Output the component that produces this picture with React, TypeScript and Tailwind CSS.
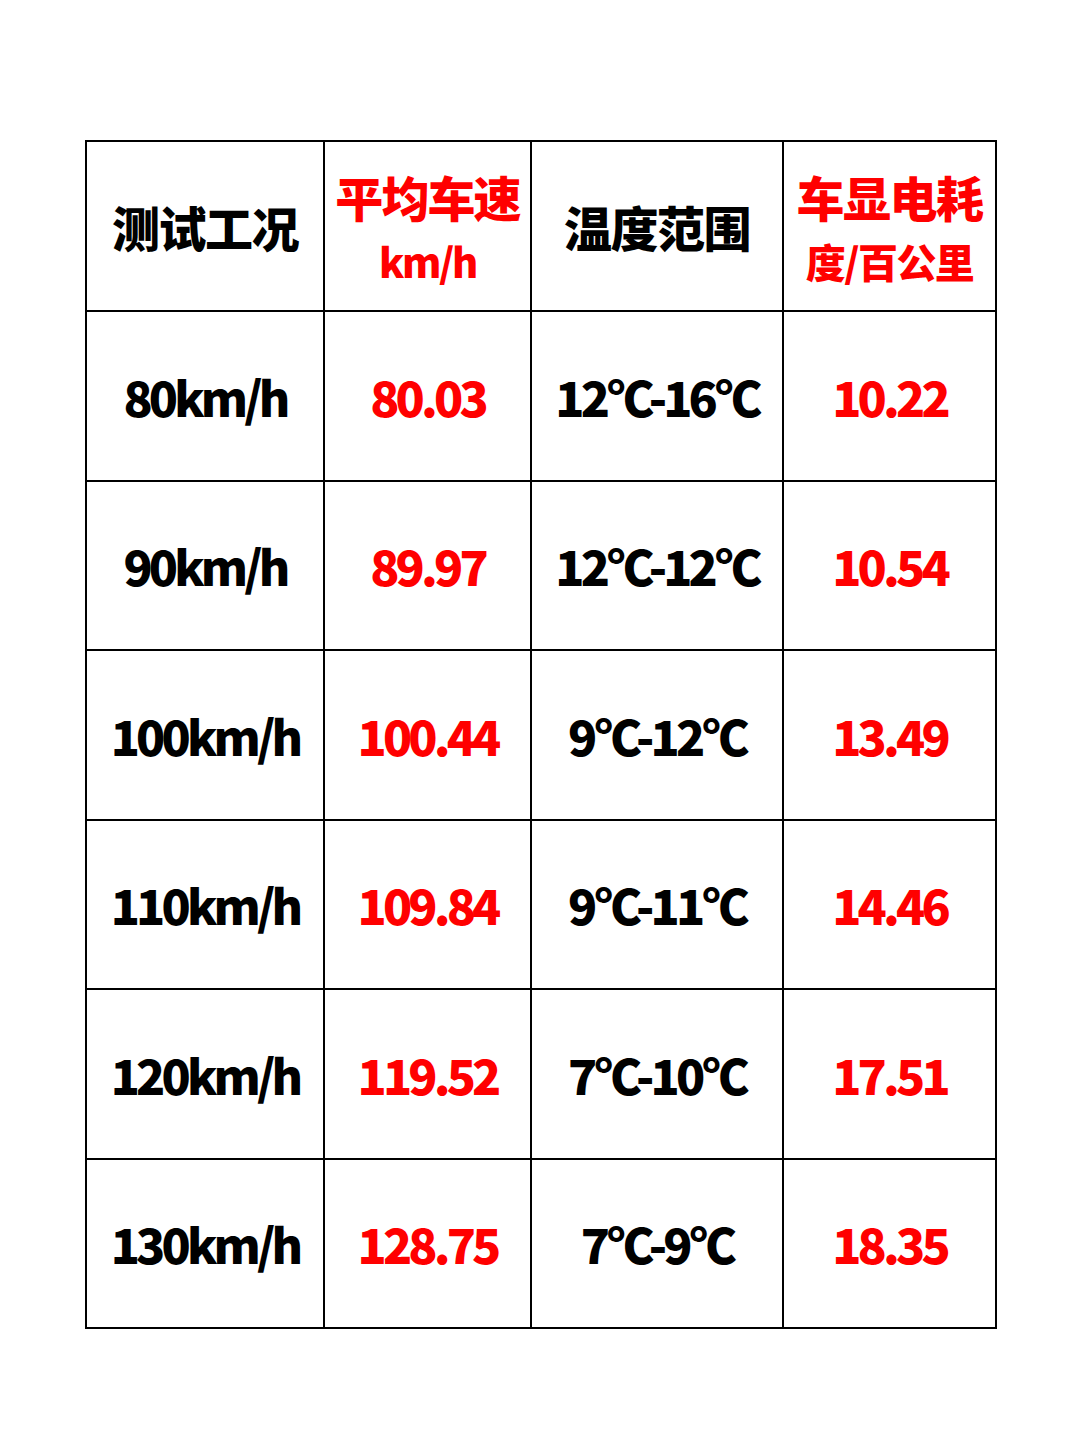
const rows = [
  ['80km/h', '80.03', '12°C-16°C', '10.22'],
  ['90km/h', '89.97', '12°C-12°C', '10.54'],
  ['100km/h', '100.44', '9°C-12°C', '13.49'],
  ['110km/h', '109.84', '9°C-11°C', '14.46'],
  ['120km/h', '119.52', '7°C-10°C', '17.51'],
  ['130km/h', '128.75', '7°C-9°C', '18.35'],
]

const cell = 'border-2 border-black text-center text-[48px] font-black tracking-[-0.08em] leading-none'

export default function App() {
  return (
    <div
      className="w-[1080px] h-[1440px] bg-white pt-[140px] pl-[85px]"
      style={{ fontFamily: '"Noto Sans CJK SC", "Noto Sans", sans-serif' }}
    >
      <table className="border-collapse table-fixed w-[910px]">
        <colgroup>
          <col className="w-[238px]" />
          <col className="w-[207px]" />
          <col className="w-[252px]" />
          <col className="w-[213px]" />
        </colgroup>
        <thead>
          <tr className="h-[170px]">
            <th className="border-2 border-black text-[48px] font-black text-black tracking-[-0.03em] leading-none">测试工况</th>
            <th className="border-2 border-black font-black text-[#ff0000]">
              <div className="flex flex-col items-center">
                <span className="text-[48px] leading-[1.45] tracking-[-0.04em]">平均车速</span>
                <span className="text-[40px] leading-[1.45] tracking-[-0.06em]">km/h</span>
              </div>
            </th>
            <th className="border-2 border-black text-[48px] font-black text-black tracking-[-0.03em] leading-none">温度范围</th>
            <th className="border-2 border-black font-black text-[#ff0000]">
              <div className="flex flex-col items-center">
                <span className="text-[48px] leading-[1.45] tracking-[-0.03em]">车显电耗</span>
                <span className="text-[40px] leading-[1.45] tracking-[-0.04em]">度/百公里</span>
              </div>
            </th>
          </tr>
        </thead>
        <tbody>
          {rows.map((r) => (
            <tr key={r[0]} className="h-[169.5px]">
              <td className={`${cell} text-black`}>{r[0]}</td>
              <td className={`${cell} text-[#ff0000]`}>{r[1]}</td>
              <td className={`${cell} text-black`}>{r[2]}</td>
              <td className={`${cell} text-[#ff0000]`}>{r[3]}</td>
            </tr>
          ))}
        </tbody>
      </table>
    </div>
  )
}
